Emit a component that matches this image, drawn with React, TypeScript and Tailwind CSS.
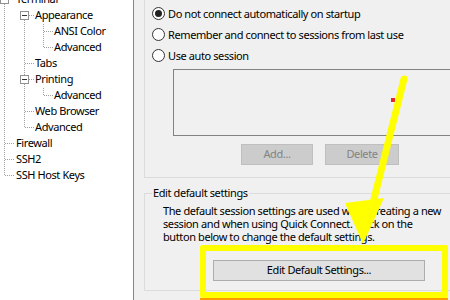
import React from "react";

const treeRows: { label: string; lvl: number }[] = [
  { label: "Terminal", lvl: 0 },
  { label: "Appearance", lvl: 1 },
  { label: "ANSI Color", lvl: 2 },
  { label: "Advanced", lvl: 2 },
  { label: "Tabs", lvl: 1 },
  { label: "Printing", lvl: 1 },
  { label: "Advanced", lvl: 2 },
  { label: "Web Browser", lvl: 1 },
  { label: "Advanced", lvl: 1 },
  { label: "Firewall", lvl: 0 },
  { label: "SSH2", lvl: 0 },
  { label: "SSH Host Keys", lvl: 0 },
];

const padByLvl = ["pl-[16px]", "pl-[35px]", "pl-[54px]"];

function TreeLines() {
  const dot = "#a0a0a0";
  const box = (cx: number, cy: number) => (
    <g>
      <rect x={cx - 4 + 0.5} y={cy - 4 + 0.5} width={8} height={8} fill="#fff" stroke="#919191" />
      <line x1={cx - 2} y1={cy + 0.5} x2={cx + 3} y2={cy + 0.5} stroke="#333" />
    </g>
  );
  const h = (x1: number, x2: number, y: number) => (
    <line x1={x1} y1={y + 0.5} x2={x2} y2={y + 0.5} stroke={dot} strokeDasharray="1 1" />
  );
  const v = (x: number, y1: number, y2: number) => (
    <line x1={x + 0.5} y1={y1} x2={x + 0.5} y2={y2} stroke={dot} strokeDasharray="1 1" />
  );
  return (
    <svg className="absolute left-0 top-0" width="133" height="300" shapeRendering="crispEdges">
      {v(4, 4, 176)}
      {v(24, 20, 128)}
      {v(43, 24, 48)}
      {v(43, 88, 96)}
      {h(9, 15, -1)}
      {h(5, 15, 143)}
      {h(5, 15, 159)}
      {h(5, 15, 175)}
      {h(29, 34, 15)}
      {h(25, 34, 63)}
      {h(29, 34, 79)}
      {h(25, 34, 111)}
      {h(25, 34, 127)}
      {h(44, 53, 31)}
      {h(44, 53, 47)}
      {h(44, 53, 95)}
      {box(4, -1)}
      {box(24, 15)}
      {box(24, 79)}
    </svg>
  );
}

function Radio({ checked, label }: { checked?: boolean; label: string }) {
  return (
    <div className="flex h-[21px] items-center">
      <div className="flex h-[13px] w-[13px] items-center justify-center rounded-full border border-[#333333] bg-white">
        {checked && <div className="h-[7px] w-[7px] rounded-full bg-[#222222]" />}
      </div>
      <span className="ml-[3px] leading-[16px]">{label}</span>
    </div>
  );
}

export default function App() {
  return (
    <div className="relative flex h-[300px] w-[450px] overflow-hidden font-['Noto_Sans',sans-serif] text-[11px] tracking-[-0.4px] text-black">
      <div className="relative w-[134px] shrink-0 border-r border-[#82878f] bg-white">
        <TreeLines />
        <div className="relative mt-[-9px]">
          {treeRows.map((r, i) => (
            <div key={i} className={`h-[16px] whitespace-nowrap leading-[16px] ${padByLvl[r.lvl]}`}>
              {r.label}
            </div>
          ))}
        </div>
      </div>
      <div className="flex-1 bg-[#f0f0f0] pl-[10px]">
        <div className="mt-[-10px] h-[188px] w-[330px] border-b border-l border-[#dcdcdc] pl-[7px] pt-[13px]">
          <Radio checked label="Do not connect automatically on startup" />
          <Radio label="Remember and connect to sessions from last use" />
          <Radio label="Use auto session" />
          <div className="ml-[21px] mt-[3px] h-[67px] w-[300px] border border-[#828282] bg-[#f0f0f0]" />
          <div className="mt-[8px] flex pl-[89px]">
            <div className="flex h-[21px] w-[72px] items-center justify-center border border-[#bfbfbf] bg-[#cccccc] text-[#838383]">
              Add...
            </div>
            <div className="ml-[12px] flex h-[21px] w-[74px] items-center justify-center border border-[#bfbfbf] bg-[#cccccc] text-[#838383]">
              Delete
            </div>
          </div>
        </div>
        <div className="relative mt-[15px] h-[98px] w-[330px] border border-[#dcdcdc]">
          <div className="absolute left-[7px] top-[-9px] bg-[#f0f0f0] px-[1px] leading-[16px]">
            Edit default settings
          </div>
          <div className="pl-[18px] pt-[10px] leading-[13px] whitespace-nowrap">
            The default session settings are used when creating a new
            <br />
            session and when using Quick Connect.&nbsp; Click on the
            <br />
            button below to change the default settings.
          </div>
          <div className="ml-[68px] mt-[17px] flex h-[21px] w-[212px] items-center justify-center border border-[#adadad] bg-[#e1e1e1]">
            Edit Default Settings...
          </div>
        </div>
      </div>

      {/* annotation overlays */}
      <div className="absolute left-[391px] top-[98px] h-[4px] w-[4px] bg-[#e8262b]" />
      <div className="absolute left-[200px] top-[245px] h-[53px] w-[248px] rounded-[2px] border-[6px] border-[#ffff00]" />
      <div className="absolute left-[200px] top-[298px] h-[2px] w-[248px] bg-[#ff9a00]" />
      <svg className="absolute left-0 top-0" width="450" height="300">
        <line x1="404" y1="79" x2="370" y2="215" stroke="#ffff00" strokeWidth="7" strokeLinecap="round" />
        <polygon points="345,203 384,198 363,244" fill="#ffff00" />
      </svg>
    </div>
  );
}
